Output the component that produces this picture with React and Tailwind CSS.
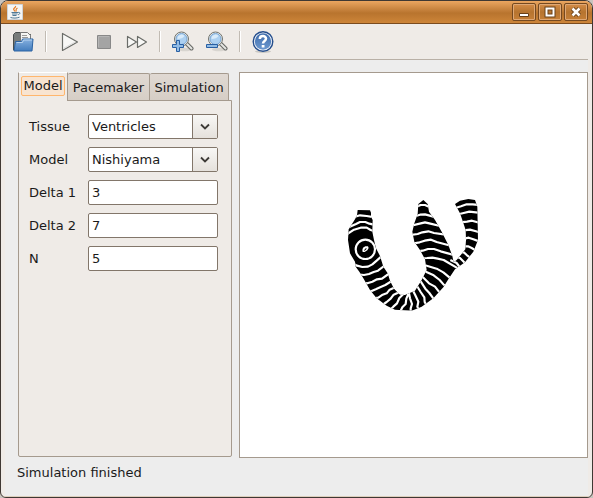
import { useState } from "react";

function FolderIcon() {
  return (
    <svg width="22" height="22" viewBox="0 0 22 22">
      <defs>
        <linearGradient id="folder" x2="0" y2="1">
          <stop stopColor="#86b0df" />
          <stop offset="1" stopColor="#447dbd" />
        </linearGradient>
      </defs>
      <path d="M1.500 19V3.500L3.500 1.500h5l1 2h9v14z" fill="#777b7a" stroke="#494d4c" />
      <path d="M8.500 11V1.500h7l3 3V11z" fill="#f5f5f3" stroke="#777" />
      <path d="M10 4.500h5M10 6.500h6" stroke="#999" />
      <path d="M3.500 10.500h6l1-2.500h10.500L20 20H2z" fill="url(#folder)" stroke="#2c64a4" strokeLinejoin="round" />
      <path d="M4.500 11.500h6l1-2.500h8.500" fill="none" stroke="#b9d4ef" />
    </svg>
  );
}

function PlayIcon() {
  return (
    <svg width="18" height="20" viewBox="0 0 18 20">
      <path d="M1.500 1.500v17L16.500 10z" fill="#f8f8f6" stroke="#6b6d69" strokeWidth="1.200" strokeLinejoin="round" />
      <path d="M3 16l11-6" stroke="#ddd" />
    </svg>
  );
}

function StopIcon() {
  return (
    <svg width="14" height="14" viewBox="0 0 14 14">
      <path d="M.5 .5h13v13H.5z" fill="#a4a4a4" stroke="#888" />
      <path d="M1.500 12V1.500H12" fill="none" stroke="#b5b5b5" />
    </svg>
  );
}

function ForwardIcon() {
  return (
    <svg width="22" height="14" viewBox="0 0 22 14">
      <path d="M1.500 1.500v11L10.500 7zM11.500 1.500v11L20.500 7z" fill="#f8f8f6" stroke="#6b6d69" strokeWidth="1.200" strokeLinejoin="round" />
    </svg>
  );
}

function ZoomIcon({ plus }) {
  return (
    <svg width="22" height="22" viewBox="0 0 22 22">
      <ellipse cx="13" cy="18.500" rx="7" ry="1.800" fill="#d8d5d0" />
      <path d="M14 12l5.500 5.500" stroke="#666864" strokeWidth="4" strokeLinecap="round" />
      <path d="M14 12l5.500 5.500" stroke="#e6e6e3" strokeWidth="2" strokeLinecap="round" />
      <circle cx="9.500" cy="8" r="7" fill="#e9ebe9" stroke="#70736f" />
      <circle cx="9.500" cy="8" r="5.500" fill="#acd0f1" stroke="#7da7d3" />
      <path d="M5.500 8a4 4 0 0 1 7-3c-1 2-4 3-7 3z" fill="#d9ebfa" />
      {plus ? (
        <path d="M4.500 9.500h3v4h4v3h-4v4h-3v-4h-4v-3h4z" fill="#91bbe5" stroke="#285fa3" />
      ) : (
        <path d="M.5 13.500h11v3H.5z" fill="#91bbe5" stroke="#285fa3" />
      )}
    </svg>
  );
}

function HelpIcon() {
  return (
    <svg width="22" height="22" viewBox="0 0 22 22">
      <defs>
        <linearGradient id="help" x2="0" y2="1">
          <stop stopColor="#3f6cab" />
          <stop offset="1" stopColor="#6c98cf" />
        </linearGradient>
      </defs>
      <ellipse cx="11" cy="20.500" rx="8" ry="1.500" fill="#c9c7c3" />
      <circle cx="11" cy="10.500" r="9.800" fill="#f2f5fa" stroke="#244d8c" strokeWidth="1.400" />
      <circle cx="11" cy="10.500" r="8.200" fill="url(#help)" />
      <path d="M7.800 8C7.800 4.200 14 4.200 14 7.600c0 2.400-3 2.300-3 5" fill="none" stroke="#fff" strokeWidth="2.500" />
      <path d="M9.700 14h2.800v2.500H9.700z" fill="#fff" />
    </svg>
  );
}

function JavaIcon() {
  return (
    <svg width="16" height="16" viewBox="0 0 16 16">
      <path d="M.5 .5h15v15H.5z" fill="#f5f5f4" stroke="#cfd3d8" />
      <path d="M8.500 2c1 1.500-3 2.300-1.500 4l1 1.500M10.500 4C8 5.200 9.500 6 9 7.500" fill="none" stroke="#e57b25" strokeWidth="1.200" />
      <path d="M4.500 8.500h6.500M5 10h5.500M5.500 11.500h4M3.500 13.500c3 .8 6 .8 9-.3M11 8.500c3-.7 2 2 0 2.300" fill="none" stroke="#4e7896" />
    </svg>
  );
}

function TissueWave() {
  return (
    <svg className="shrink-0" width="133" height="136" viewBox="21 21 399 408" role="img" aria-label="Ventricle simulation">
      <defs>
        <clipPath id="tissue">
          <path d="M53 60L90 61L93 68L93 80L98 90L97 125L102 150L108 175L120 198L130 230L143 250L150 272L162 296L180 314L195 315L225 302L245 270L260 240L255 208L240 180L223 155L217 125L223 100L233 72L235 42L250 30L263 42L267 65L285 90L305 125L325 165L337 198L341 217L350 210L363 194L376 178L378 150L377 120L367 90L360 70L345 42L360 32L385 27L405 30L412 50L414 150L400 185L375 217L345 238L325 268L310 292L280 325L245 350L215 362L165 359L140 347L110 325L90 300L70 265L58 245L47 230L45 215L30 190L24 150L26 118L45 88L51 76Z" />
        </clipPath>
      </defs>
      <g clipPath="url(#tissue)">
        <path d="M0 0h440v440H0z" fill="#000" />
        <g fill="none" stroke="#fff" strokeWidth="6.500" strokeLinejoin="round">
          <path d="M40 82L60 76L80 78L104 82M26 112L48 102L60 96L76 96L88 101L110 106M14 142L25 130L42 119L62 113L80 113L92 120L112 127" />
          <circle cx="76" cy="178" r="29" />
          <path d="M30 216L51 227L67 231L84 230L97 223L110 212L130 194" />
          <path d="M45 252L72 255L87 252L101 246L114 242L140 222M54 276L82 280L97 275L111 268L126 266L154 246M68 302L95 303L109 297L122 291L136 285L163 268M89 327L115 323L128 314L140 310L149 299L174 288" />
          <path d="M120 350L140 336L152 326L161 314L184 304M143 367L160 350L171 340L178 324L194 308M176 375L187 352L197 342L199 326L208 305M212 375L212 355L216 342L210 325L207 310M239 365L232 350L235 335L226 316L218 300M264 354L254 336L253 322L242 306L231 288M290 340L276 320L268 309L256 296L242 274M313 322L296 304L285 290L267 280L246 259M332 297L311 284L299 270L281 256L246 240M346 277L328 262L310 247L290 236L250 224" />
          <path d="M226 52L242 45L255 45L275 54M220 80L240 74L255 73L280 80M210 108L239 101L255 97L271 101L300 108M204 136L233 132L247 127L265 124L282 129L316 134M210 162L239 157L254 152L273 149L290 156L335 168M220 186L248 182L264 177L282 177L302 184L345 196M234 205L261 204L277 203L293 206L311 210L355 236" />
          <path d="M344 55L363 49L380 43L398 43L425 46M346 75L371 69L388 65L425 69M352 98L381 95L396 92L427 101M364 122L390 119L405 123L428 129M364 148L386 143L400 148L428 158M360 169L384 169L395 174L417 187M350 183L373 188L381 196L398 208M342 199L360 204L380 224M331 210L350 219L364 238" />
        </g>
        <path d="M67 180l2-7 7-4h8l2 5-4 7-8 5h-6zM74 182l6-6-2-2-6 7z" fill="#fff" fillRule="evenodd" />
      </g>
    </svg>
  );
}

const toolClass = "flex h-8 items-center justify-center";

function Separator() {
  return <span className="h-[21px] w-0.5 border-l border-[#c1bbb3] bg-white" />;
}

function Toolbar() {
  return (
    <div role="toolbar" className="flex h-9 items-center border-b border-[#b9b0a6] bg-[#efebe7] pl-[7px]">
      <button aria-label="Open" className={`${toolClass} w-[22px]`}><FolderIcon /></button>
      <span className="w-[11px]" />
      <Separator />
      <span className="w-3.5" />
      <button aria-label="Run" className={`${toolClass} w-[18px]`}><PlayIcon /></button>
      <button aria-label="Stop" className={`${toolClass} ml-[18px] w-3.5`}><StopIcon /></button>
      <button aria-label="Fast forward" className={`${toolClass} ml-[15px] w-[22px]`}><ForwardIcon /></button>
      <span className="w-[11px]" />
      <Separator />
      <button aria-label="Zoom in" className={`${toolClass} ml-[11px] w-[22px]`}><ZoomIcon plus /></button>
      <button aria-label="Zoom out" className={`${toolClass} ml-3 w-[22px]`}><ZoomIcon /></button>
      <span className="w-[11px]" />
      <Separator />
      <button aria-label="Help" className={`${toolClass} ml-[11px] w-[22px]`}><HelpIcon /></button>
    </div>
  );
}

const fieldClass = "h-[25px] w-full rounded-xs border border-[#82766a] bg-white px-[3px] outline-none";

function SelectRow({ id, label, options }) {
  return (
    <>
      <label htmlFor={id}>{label}</label>
      <div className="relative">
        <select id={id} className={`${fieldClass} appearance-none`}>
          {options.map((option) => <option key={option}>{option}</option>)}
        </select>
        <span className="pointer-events-none absolute inset-y-px right-px flex w-[25px] items-center justify-center border-l border-[#82766a] bg-linear-to-b from-[#f8f7f5] to-[#e5e1dc]">
          <svg width="12" height="8" viewBox="0 0 12 8">
            <path d="M2 1.500l4 4 4-4" fill="none" stroke="#3e3b37" strokeWidth="1.800" />
          </svg>
        </span>
      </div>
    </>
  );
}

function TextRow({ id, label, value }) {
  return (
    <>
      <label htmlFor={id}>{label}</label>
      <input id={id} defaultValue={value} className={fieldClass} />
    </>
  );
}

function TitleButton({ label, children }) {
  return (
    <button aria-label={label} className="flex h-[18px] w-6 items-center justify-center rounded-xs border border-[#754920] bg-linear-to-b from-[#d58d48] via-[#b6742f] to-[#c67f37] inset-ring inset-ring-[#dfa875]">
      <svg width="12" height="12" viewBox="0 0 12 12">{children}</svg>
    </button>
  );
}

const tabs = [
  { name: "Model", width: "w-[50px]" },
  { name: "Pacemaker", width: "w-[82px]" },
  { name: "Simulation", width: "w-[79px]" },
];

export default function App() {
  const [active, setActive] = useState("Model");
  return (
    <div className="h-screen bg-[#c9c4be] font-['DejaVu_Sans',sans-serif] text-[13px] leading-4 text-[#1a1a1a]">
      <div className="flex h-full flex-col overflow-hidden rounded-t-lg rounded-b-md border border-[#3f3833] bg-[#efebe7]">
        <header className="flex h-[23px] shrink-0 items-center justify-between border-b border-[#7b4b1e] bg-linear-to-b from-[#eba660] from-0% via-[#b8742e] via-55% to-[#cd8539] pr-1 pl-1.5">
          <JavaIcon />
          <div className="flex gap-0.5">
            <TitleButton label="Minimize">
              <path d="M1.500 7.500h9v3h-9z" fill="#fff" stroke="#694018" />
            </TitleButton>
            <TitleButton label="Maximize">
              <path d="M2.500 2.500h7v7h-7z" fill="none" stroke="#694018" strokeWidth="4" />
              <path d="M2.500 2.500h7v7h-7z" fill="none" stroke="#fff" strokeWidth="2" />
            </TitleButton>
            <TitleButton label="Close">
              <path d="M2.500 2.500l7 7M9.500 2.500l-7 7" stroke="#694018" strokeWidth="4.500" />
              <path d="M2.500 2.500l7 7M9.500 2.500l-7 7" stroke="#fff" strokeWidth="2.600" />
            </TitleButton>
          </div>
        </header>
        <div className="mx-1 flex min-h-0 flex-1 flex-col bg-[#ededed]">
          <Toolbar />
          <main className="flex min-h-0 flex-1 gap-[7px] pt-3 pl-[13px]">
            <section className="flex w-[214px] shrink-0 flex-col pb-px">
              <div role="tablist" className="flex items-end">
                {tabs.map(({ name, width }) =>
                  name === active ? (
                    <button key={name} role="tab" aria-selected="true" onClick={() => setActive(name)} className={`${width} z-10 -mb-px h-[29px] border-x border-t border-[#a59a8e] border-t-white bg-[#efebe7] px-0.5 pb-0.5`}>
                      <span className="block rounded-xs border border-[#ffb66d] bg-[#f8e4d1] py-px">{name}</span>
                    </button>
                  ) : (
                    <button key={name} role="tab" aria-selected="false" onClick={() => setActive(name)} className={`${width} h-[27px] rounded-t-xs border-t border-r border-[#a59a8e] bg-linear-to-b from-[#e0d9d3] to-[#d6cec6] pt-px`}>
                      {name}
                    </button>
                  )
                )}
              </div>
              <div role="tabpanel" className="flex-1 rounded-b-xs border border-[#a59a8e] bg-[#efebe7] px-2.5 pt-[13px]">
                <form className="grid grid-cols-[59px_130px] items-center gap-y-2">
                  <SelectRow id="tissue-type" label="Tissue" options={["Ventricles"]} />
                  <SelectRow id="model-type" label="Model" options={["Nishiyama"]} />
                  <TextRow id="delta-1" label="Delta 1" value="3" />
                  <TextRow id="delta-2" label="Delta 2" value="7" />
                  <TextRow id="n-value" label="N" value="5" />
                </form>
              </div>
            </section>
            <section className="flex min-w-0 flex-1 items-center justify-center overflow-hidden border border-[#a59a8e] bg-white">
              <TissueWave />
            </section>
          </main>
          <footer role="status" className="h-[38px] shrink-0 pt-[7px] pl-3">Simulation finished</footer>
        </div>
        <div className="h-px shrink-0 bg-[#dccfbd]" />
      </div>
    </div>
  );
}
